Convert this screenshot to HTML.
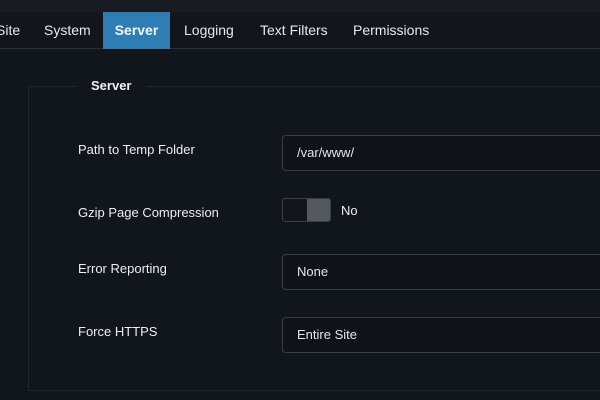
<!DOCTYPE html>
<html><head><meta charset="utf-8"><style>
*{margin:0;padding:0;box-sizing:border-box}
body{width:600px;height:400px;overflow:hidden;background:#11151c;font-family:"Liberation Sans",sans-serif;color:#e8eaee;position:relative}
.top{position:absolute;left:0;top:0;width:600px;height:12px;background:#181b22}
.tabs{position:absolute;left:0;top:12px;width:600px;height:37px;background:#12151c;border-bottom:1px solid #2a2e36}
.tab{position:absolute;top:0;height:37px;line-height:37px;font-size:14px;color:#e6e8ec}
.act{background:#2e7db4;font-weight:bold;left:103px;width:67px;text-align:center;color:#f3f6f9}
.fs{position:absolute;left:28px;top:86px;width:600px;height:305px;border:1px solid #22262d;border-right:none}
.leg{position:absolute;left:76px;top:77px;padding:0 15px;background:#11151c;font-weight:bold;font-size:13px;line-height:17px;color:#f0f2f5}
.lbl{position:absolute;left:78px;font-size:13px;color:#eceef1}
.inp{position:absolute;left:282px;width:330px;height:36px;border:1px solid #3a3f47;border-radius:4px;background:#0f1218;font-size:13px;line-height:34px;padding-left:14px;color:#e4e6ea}
.tog{position:absolute;left:282px;top:198px;width:49px;height:24px;border:1px solid #3a3f47;border-radius:3px;background:#12151c;overflow:hidden}
.tog div{position:absolute;left:24px;top:0;width:25px;height:24px;background:#54585f}
</style></head><body>
<div class="top"></div>
<div class="tabs">
<div class="tab" style="left:-4px">Site</div>
<div class="tab" style="left:44px">System</div>
<div class="tab act">Server</div>
<div class="tab" style="left:184px">Logging</div>
<div class="tab" style="left:260px">Text Filters</div>
<div class="tab" style="left:353px">Permissions</div>
</div>
<div class="fs"></div>
<div class="leg">Server</div>
<div class="lbl" style="top:142px">Path to Temp Folder</div>
<div class="inp" style="top:135px">/var/www/</div>
<div class="lbl" style="top:205px">Gzip Page Compression</div>
<div class="tog"><div></div></div>
<div class="lbl" style="left:341px;top:203px;font-size:13px">No</div>
<div class="lbl" style="top:261px">Error Reporting</div>
<div class="inp" style="top:254px">None</div>
<div class="lbl" style="top:324px">Force HTTPS</div>
<div class="inp" style="top:317px">Entire Site</div>
</body></html>
